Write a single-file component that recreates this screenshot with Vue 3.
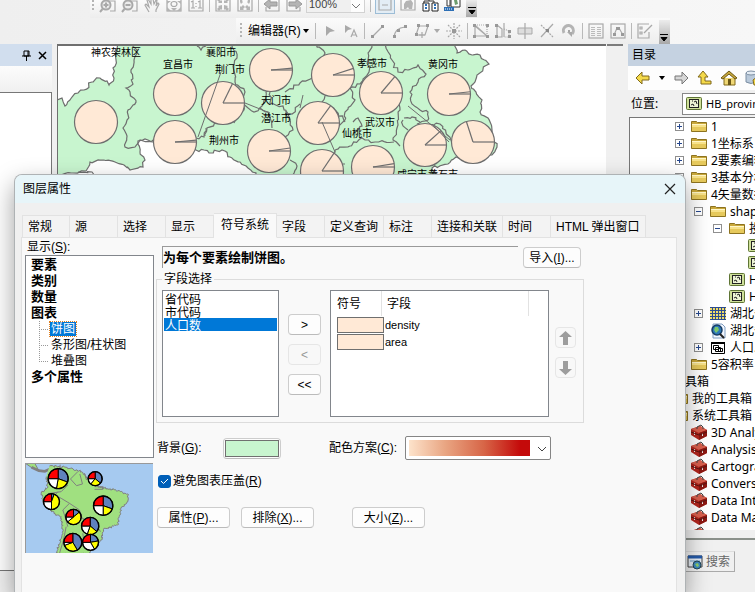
<script setup>
import { ref } from 'vue'

const G = 'fill="none" stroke="#a9a9a9" stroke-width="1.2"'
const F = 'fill="#b4b4b4"'
const topIcons = [
  { name: '放大', svg: `<g ${G}><path d="M6 1h9v10h-5M4 4v-3"/><circle cx="6" cy="5" r="4.5" stroke-width="2" fill="#ececec"/><path d="M3.500 5h5M6 2.500v5M2.500 9L0 12" stroke-width="2"/></g>` },
  { name: '缩小', svg: `<g ${G}><path d="M6 1h9v10h-5M4 4v-3"/><circle cx="6" cy="5" r="4.500" stroke-width="2" fill="#ececec"/><path d="M3.500 5h5M2.500 9L0 12" stroke-width="2"/></g>` },
  { name: '平移', svg: `<path ${G} d="M5 12L1 5l1-1 3 3L3 0l1-1 3 5V-1h2l1 5 2-4h1l-1 6 2-3 1 1-3 6v2"/>` },
  { name: '全图', svg: `<rect ${G} x="1" y="-2" width="14" height="13"/><ellipse ${G} cx="8" cy="4" rx="3" ry="2.500"/><path ${F} d="M1 1l4 0-4 3zM15 1h-4l4 3zM8 11l-3-3h6zM1 11V7l4 4zM15 11V7l-4 4z"/>` },
  { name: '1:1', svg: `<path ${G} d="M1-2v13h14V-2M3 2l2-1v7M3 8h4M10 2l2-1v7M10 8h4M8 3v1M8 6v1"/>` },
  { sep: true },
  { name: '固定放大', svg: `<path ${G} d="M1-2v13h14V-2"/><path ${F} d="M7 3H3l1-1-3-3 2-1 3 3 1-1zM9 3h4l-1-1 3-3-2-1-3 3-1-1zM7 5v5L6 9l-2 2-2-2 2-2-1-1zM9 5v5l1-1 2 2 2-2-2-2 1-1z"/>` },
  { name: '固定缩小', svg: `<path ${G} d="M1-2v13h14V-2"/><path ${F} d="M3 10V6l1 1 2-2 2 2-2 2 1 1zM13 10V6l-1 1-2-2-2 2 2 2-1 1zM3-1h3L5 1l1 1-2 2-1-2zM13-1h-3l1 2-1 1 2 2 1-2z"/>` },
  { sep: true },
  { name: '后退', svg: `<path ${G} d="M2 7v4h13V-1"/><path ${F} stroke="#999" d="M0 4l6-5v3h7v4H6v3z"/>` },
  { name: '前进', svg: `<path ${G} d="M14 7v4H1V-1"/><path ${F} stroke="#999" d="M16 4l-6-5v3H3v4h7v3z"/>` },
]
const viewIcons = [
  { name: '草稿模式', svg: `<path ${G} d="M2-2v12h12V-2M5 5h6M8-2"/>`, pressed: true },
  { name: '焦点', svg: `<path ${G} d="M1-2v12h14V-2"/><path ${F} d="M4 9V4l2-3 5-1 2 3-1 6H9L8 7 6 9z"/>` },
  { name: '切换', svg: `<path fill="none" stroke="#333" d="M2 4V1h10v3M7 1v-2"/><path fill="#fff" stroke="#222" d="M1 3h6v8H1zM10 3h6v8h-6z"/><path stroke="#2d6fb5" stroke-width="2" d="M3 5h2M3 8h2M12 5h2M12 8h2"/>` },
  { name: '工具栏', svg: `<path fill="#fff" stroke="#333" d="M7-2h9v9H7zM3-2h3v8H3z"/><path fill="#6d9d6e" d="M10 0h3l1 4-3 1z"/><path fill="#2d6fb5" d="M0 7h10v4H0z"/><path stroke="#fff" stroke-dasharray="1 1" d="M1 9h8"/>` },
]
const editIcons = [
  { name: '编辑工具', svg: `<path fill="#a9a9a9" d="M5 3l9 5-5 1-4 4z"/>` },
  { name: '注记编辑', svg: `<path fill="#a9a9a9" d="M2 2l7 4-4 1-3 3z"/><path ${G} stroke-width="2" d="M8 14l3-7 3 7M9 12h4"/>` },
  { sep: true },
  { name: '直线', svg: `<path ${G} d="M3 13L13 3"/><path fill="#999" d="M1 12h3v3H1zM11 2h3v3h-3z"/>` },
  { name: '弧线', svg: `<path ${G} d="M2 14Q3 5 13 4"/><path fill="#999" d="M1 12h3v3H1zM5 6h3v3H5zM12 2h3v3h-3z"/>` },
  { name: '追踪', svg: `<path ${G} stroke-width="1.500" d="M5 3h9l-3 9H2z"/><path fill="#999" d="M3 1h3v3H3zM12 1h3v3h-3zM1 10h3v3H1z"/><path ${G} d="M8 9v6M5 12h6"/>`, menu: true },
  { name: '点', svg: `<path ${G} stroke-dasharray="2 1" d="M8 0v16M0 8h16M2 2l12 12M14 2L2 14"/><path fill="#999" d="M6 6h4v4H6z"/>` },
  { sep: true },
  { name: '编辑折点', svg: `<path ${G} d="M2 2v11h12zM14 13L2 3"/><path ${G} stroke-dasharray="1 1" d="M2 2h12v11"/><path fill="#999" d="M0 1h3v3H0zM0 12h3v3H0zM13 12h3v3h-3zM13 1h3v3h-3z"/>` },
  { name: '整形要素', svg: `<path ${G} d="M2 2v12h5V6zM9 0v14"/><path ${G} stroke-dasharray="1 1" d="M9 6l5 2v6H9"/><path fill="#999" d="M0 1h3v3H0zM0 12h3v3H0zM13 7h3v3h-3zM13 12h3v3h-3z"/>` },
  { name: '裁剪面', svg: `<path fill="#ddd" stroke="#a9a9a9" d="M1 5h14v6H1z"/><path ${G} stroke-width="1.500" d="M8 0v16"/>` },
  { name: '分割', svg: `<path ${G} d="M2 14L14 1"/><path ${G} stroke-dasharray="2 1" d="M2 2l12 12"/><path fill="#888" d="M7 6h3v3H7z"/>` },
  { name: '旋转', svg: `<path fill="none" stroke="#b4b4b4" stroke-width="3" d="M3 10A5 5 0 1 1 11 11"/><path fill="#aaa" d="M6 9h5v5z"/><circle cx="8" cy="8" r="1" fill="#888"/>` },
  { sep: true },
  { name: '属性', svg: `<rect ${G} x="1" y="1" width="14" height="14"/><path stroke="#bbb" d="M3 4.500h4M3 6.500h4M3 8.500h4M3 10.500h4M3 12.500h4M9 4.500h4M9 6.500h4M9 8.500h4M9 10.500h4M9 12.500h4"/>` },
  { name: '草图属性', svg: `<rect ${G} x="1" y="1" width="14" height="14"/><path ${G} stroke-width="1.500" d="M4 12l3-7h2l4 7"/><path fill="#999" d="M3 10h3v3H3zM6 4h4v3H6zM11 10h3v3h-3z"/>` },
  { sep: true },
  { name: '创建要素', svg: `<path ${G} d="M12 1H1v14h11V9M3 4h2v2H3zM3 9h2v2H3z"/><path ${G} stroke-width="2" d="M7 10l8-8"/>` },
]

/* Adds small deterministic steps to a polyline so that borders look surveyed. */
function rough(text, amp = 2) {
  const pts = text.trim().split(/\s+/).map(p => p.split(',').map(Number))
  let seed = pts[0][0] * 7 + pts[0][1] * 13 + 5
  const rnd = () => ((seed = (seed * 1103 + 12345) % 65521) / 65521 - 0.5) * amp * 2
  let d = `M${pts[0]}`
  for (let i = 1; i < pts.length; i++) {
    const [ax, ay] = pts[i - 1], [bx, by] = pts[i]
    const n = Math.max(1, Math.round(Math.hypot(bx - ax, by - ay) / 3))
    for (let k = 1; k <= n; k++) {
      const j = k < n ? 1 : 0
      d += `L${(ax + (bx - ax) * k / n + rnd() * j).toFixed(1)} ${(ay + (by - ay) * k / n + rnd() * j).toFixed(1)}`
    }
  }
  return d
}
const land = rough('117,44 116,60 113,68 114,78 109,85 107,81 100,78 92,82 84,90 78,93 72,97 65,106 62,98 56,100 56,176 73,173 86,171 90,162 104,160 115,162 124,165 130,170 143,167 145,160 140,152 138,141 145,139 153,142 175,150 196,150 204,150 209,153 222,150 230,157 240,162 248,168 256,173 256,180 440,180 432,168 448,164 456,157 462,160 480,160 492,155 497,147 494,140 492,130 488,118 480,112 482,100 476,92 471,86 475,82 477,75 489,64 480,55 472,55 465,50 457,53 454,44', 1.5)
const borders = [
  '132,44 137,50 134,60 131,70 133,84 126,88 130,92 136,102 128,110 127,120 123,128 127,136 125,147 135,147 140,140 152,141 160,132',
  '232,44 237,58 233,66 235,82 245,92 244,110 236,118 234,123',
  '205,136 207,128 220,122', '196,138 204,137 206,128',
  '197,46 201,50 206,46', '244,105 254,112 262,106 266,92 275,86',
  '260,108 268,112 272,128', '316,44 325,53 322,60',
  '372,44 368,60 369,72 360,84 350,88 355,100 345,112 345,120 338,128',
  '285,92 300,83 312,78', '385,44 392,60 398,72 408,70 418,65 426,74 418,82 410,92 412,104 420,110 428,112 428,120 417,124',
  '399,98 400,110 397,128 393,140 400,146', '325,96 322,104 335,110 345,122',
  '404,118 412,117 420,122', '403,120 403,126 408,130', '353,122 358,118 362,126 355,132',
  '300,104 292,114 286,112 293,130 284,138', '335,150 350,146 362,138 375,142 394,142',
  '335,150 334,158 345,164', '290,160 297,166 292,176', '270,92 270,104 283,106 290,120',
  '428,125 440,124 446,133 452,142', '78,172 92,172 94,180',
].map(p => rough(p, 1.5))
const leaders = ['M198,137L221,72', 'M245,103L270,113', 'M322,122L335,152', 'M408,106L450,140', 'M303,95L300,108', 'M432,124L449,142']
const charts = [
  [96, 122], [175, 94], [175, 142, [0, 5]], [223, 103, [0, 64]], [271, 70, [0, 5]],
  [269, 151, [0, 8]], [333, 75, [0, 18]], [381, 93, [0, 50]], [449, 94, [0, 6]],
  [318, 123, [0, 54]], [425, 145, [0, 42]], [473, 142, [0, 108]], [322, 171, [0, 56]], [373, 167, [0, 9]],
]
const R = 21.5
const ray = (x, y, a) => `M${x} ${y}L${x + R * Math.cos(a * Math.PI / 180)} ${y - R * Math.sin(a * Math.PI / 180)}`
const cities = [
  ['神农架林区', 91, 56], ['襄阳市', 206, 56], ['宜昌市', 163, 68], ['荆门市', 215, 73],
  ['天门市', 261, 104], ['潜江市', 261, 122], ['荆州市', 209, 144], ['孝感市', 357, 67],
  ['黄冈市', 428, 68], ['武汉市', 365, 126], ['仙桃市', 342, 137], ['咸宁市', 397, 178], ['黄石市', 428, 178],
]

const tree = [
  [2, 'folder', '1', '+'], [2, 'folder', '1坐标系', '+'], [2, 'folder', '2要素编辑', '+'],
  [2, 'folder', '3基本分析', '+'], [2, 'folder', '4矢量数据', '-'], [3, 'folder', 'shape', '-'],
  [4, 'folder', '投影', '-'], [5, 'shp', 'HB'], [5, 'shp', 'HB'], [4, 'shp', 'HB'], [4, 'shp', 'HB'],
  [3, 'raster', '湖北省', '+'], [3, 'layer', '湖北省'], [3, 'table', '人口.xls', '+'],
  [2, 'folder', '5容积率'], [0, 'none', '工具箱'], [1, 'folder', '我的工具箱'], [1, 'folder', '系统工具箱'],
  [2, 'box', '3D Analyst'], [2, 'box', 'Analysis'], [2, 'box', 'Cartography'], [2, 'box', 'Conversion'],
  [2, 'box', 'Data Interop'], [2, 'box', 'Data Manage'], [2, 'box', ''],
]
const glyphs = {
  none: '',
  folder: '<path fill="#c9a83a" stroke="#8d7320" d="M.5 12.500V2.500h5l1 1h9v9z"/><path fill="#f7e28a" d="M1 6h14v2H1z"/><path fill="#e6c95c" d="M1 8h14v4H1z"/><path stroke="#fff6c8" d="M1 5.500h14"/>',
  shp: '<rect x=".5" y="1.500" width="15" height="12" rx="1" fill="#cfe09a" stroke="#5f7535"/><rect x="3.500" y="3.500" width="9" height="8" fill="#eef5d6" stroke="#222"/><path stroke="#222" fill="none" d="M5 9l2-1 1 2M8 6l2-1 1 3M6 5h1"/>',
  raster: '<path fill="#2c4c8f" d="M0 1h16v13H0z"/><path stroke="#f0dc69" stroke-width="2" stroke-dasharray="2 1" d="M0 3h16M0 6h16M0 9h16M0 12h16"/>',
  layer: '<path fill="#f2f7ff" stroke="#7f9cc0" d="M3 1h9l3 3v11H3z"/><circle cx="7" cy="7" r="5" fill="#2d78b8" stroke="#163d66" stroke-width="1.500"/><path fill="#7dc56a" d="M5 4l3 0 1 3-3 3-2-3z"/><path stroke="#222" stroke-width="2" d="M10 11l4 4"/>',
  table: '<path fill="#fff" stroke="#000" d="M1.500 2.500h13v11h-13z"/><path stroke="#000" stroke-width="2" d="M1 3h14"/><path fill="#fff" stroke="#000" d="M3.500 5.500h5v4h-5zM5.500 7.500h5v4h-5zM8.500 8.500h4v3h-4z"/>',
  box: '<path fill="#b3261e" d="M0 4l9-3 7 4v6l-8 4-8-5z"/><path fill="#d9604e" d="M0 4l9-3 7 4-8 3z"/><path fill="#8c1812" d="M8 8l8-3v6l-8 4z"/><path fill="none" stroke="#444" d="M6 4V2l4-2 2 2v2"/><path stroke="#eee" d="M3.500 7v3M11.500 8v3"/><path stroke="#5a1410" d="M0 7l8 3 8-3" fill="none"/>',
}
const tabs = ['常规', '源', '选择', '显示', '符号系统', '字段', '定义查询', '标注', '连接和关联', '时间', 'HTML 弹出窗口']
const activeTab = ref('符号系统')
const field = ref(['人口数'])
const avoid = ref(true)
const scale = ref('100%')

/* Sector list of a pie: x, y, radius, end of blue, end of yellow, degrees clockwise from the top. */
const previewPies = [
  [176, 146, 30, 110, 190], [287, 146, 21, 130, 220], [156, 215, 24, 20, 180], [311, 227, 29, 110, 180],
  [222, 261, 23, 50, 230], [272, 288, 26, 130, 200], [220, 337, 27, 150, 250], [273, 337, 24, 80, 150],
].map(([x, y, r, a, b]) => {
  const p = t => `${x + r * Math.sin(t * Math.PI / 180)} ${y - r * Math.cos(t * Math.PI / 180)}`
  const s = (f, t, c) => ({ c, d: `M${x} ${y}L${p(f)}A${r} ${r} 0 ${t - f > 180 ? 1 : 0} 1 ${p(t)}Z` })
  return { x, y, r, parts: [s(0, a, '#5f82bd'), s(a, b, '#ff0'), s(b, 270, '#fff'), s(270, 360, '#f00')] }
})
const continent = rough('150,108 200,112 245,125 268,150 300,172 345,180 385,192 385,215 365,235 355,285 312,298 305,330 265,372 168,372 190,310 185,260 155,245 130,215 125,190 145,170 140,140', 3)
</script>

<template>
  <div class="app">
    <header class="bars">
      <div class="bar first">
        <i class="grip"></i>
        <template v-for="(t, i) in topIcons" :key="i">
          <i v-if="t.sep" class="sep"></i>
          <button v-else class="tool" :aria-label="t.name"><svg width="16" height="16" v-html="t.svg" /></button>
        </template>
        <div class="scale">
          <input v-model="scale" aria-label="缩放比例">
          <svg width="10" height="6"><path d="M1 1l4 4 4-4" fill="none" stroke="#777" /></svg>
        </div>
        <i class="sep"></i>
        <button v-for="t in viewIcons" :key="t.name" class="tool" :class="{ pressed: t.pressed }" :aria-label="t.name"><svg width="16" height="16" v-html="t.svg" /></button>
        <button class="more" aria-label="工具栏选项"><svg width="8" height="9"><path d="M0 1.500h8M1 4.500h6L4 8z" stroke="#000" /></svg></button>
      </div>
      <div class="bar second">
        <i class="grip"></i>
        <button class="editor">编辑器(R)<i class="caret"></i></button>
        <i class="sep"></i>
        <template v-for="(t, i) in editIcons" :key="i">
          <i v-if="t.sep" class="sep"></i>
          <button v-else class="tool" :aria-label="t.name"><svg width="16" height="16" v-html="t.svg" /><i v-if="t.menu" class="caret pale"></i></button>
        </template>
        <button class="more" aria-label="工具栏选项"><svg width="8" height="9"><path d="M0 1.500h8M1 4.500h6L4 8z" stroke="#000" /></svg></button>
      </div>
    </header>

    <main class="work">
      <aside class="contents">
        <div class="dock">
          <button class="mini" aria-label="固定"><svg width="9" height="11"><path d="M2 1h5v5H2zM0 6h9M4.500 6v5M6 1v5" fill="none" stroke="#000" /></svg></button>
          <button class="mini" aria-label="关闭"><svg width="9" height="9"><path d="M1 1l7 7M8 1L1 8" stroke="#000" stroke-width="1.500" /></svg></button>
        </div>
        <div class="strip"></div>
        <div class="toc"></div>
        <div class="below"></div>
      </aside>

      <section class="canvas">
        <svg class="map">
          <g transform="translate(-58 -46)" stroke="#6e6e6e" fill="none" stroke-width="1.200">
            <path :d="land" fill="#c8f5cf" />
            <path v-for="(b, i) in borders" :key="i" :d="b" />
            <g v-for="(c, i) in charts" :key="'c' + i">
              <circle :cx="c[0]" :cy="c[1]" :r="R" fill="#ffe9d6" />
              <path v-for="a in c[2] || []" :key="a" :d="ray(c[0], c[1], a)" />
            </g>
            <path v-for="l in leaders" :key="l" :d="l" stroke-width="1" />
            <g class="city" stroke="none" fill="#000">
              <text v-for="c in cities" :key="c[0]" :x="c[1]" :y="c[2]">{{ c[0] }}</text>
            </g>
          </g>
        </svg>
      </section>
      <div class="scroll"></div>

      <aside class="catalog">
        <h2>目录</h2>
        <nav class="nav">
          <button aria-label="后退"><svg width="16" height="16"><path d="M1 8l6-6v4h7v4H7v4z" fill="#f4d94a" stroke="#80691a" /></svg></button>
          <i class="caret"></i>
          <button aria-label="前进"><svg width="16" height="16"><path d="M15 8L9 2v4H2v4h7v4z" fill="#d6d6d6" stroke="#777" /></svg></button>
          <button aria-label="向上"><svg width="16" height="16"><path d="M6 1l5 6H8v4h6v3H4V7H1z" fill="#f4d94a" stroke="#80691a" /></svg></button>
          <button aria-label="主目录"><svg width="16" height="16"><path d="M3 8v7h11V8" fill="#efd774" stroke="#80691a" /><path d="M0 8l8-7 8 7-2 1-6-5-6 5z" fill="#c9a83a" stroke="#6b5716" /><path d="M7 9h3v6H7z" fill="#6b5716" /></svg></button>
          <button aria-label="默认数据库"><svg width="16" height="16"><path d="M1 3v9q5 3 10 0V3" fill="#b9c9da" stroke="#7d8fa3" /><ellipse cx="6" cy="3" rx="5" ry="2" fill="#e3ebf3" stroke="#7d8fa3" /><path d="M8 10l5-4 4 4v5H9z" fill="#f4d94a" stroke="#80691a" /></svg></button>
        </nav>
        <div class="place">
          <label for="place">位置:</label>
          <div class="placebox"><svg width="16" height="16" v-html="glyphs.shp" /><input id="place" value="HB_province"></div>
        </div>
        <ul class="tree">
          <li v-for="(n, i) in tree" :key="i" :style="{ paddingLeft: n[0] * 19 + 7 + 'px' }">
            <span class="exp">
              <svg v-if="n[3]" width="9" height="9"><rect x=".5" y=".5" width="8" height="8" fill="#fff" stroke="#8f8f8f" /><path :d="n[3] === '+' ? 'M2 4.500h5M4.500 2v5' : 'M2 4.500h5'" stroke="#26478d" /></svg>
            </span>
            <svg width="16" height="16" v-html="glyphs[n[1]]" /><span class="name">{{ n[2] }}</span>
          </li>
        </ul>
        <div class="docktabs">
          <button><svg width="16" height="16"><path d="M1 2h14v11H1z" fill="#e8eef5" stroke="#444" /><path d="M1 3h14" stroke="#2459a8" stroke-width="3" /><path d="M3 7h10" stroke="#6d9dc9" /><circle cx="10" cy="11" r="4" fill="#3d8bc2" stroke="#245" /><path d="M8 10l3-1 1 3-2 1z" fill="#8fd06b" /></svg>搜索</button>
        </div>
      </aside>
    </main>

    <section class="dialog" role="dialog" aria-labelledby="dlg-title">
      <div class="title">
        <h1 id="dlg-title">图层属性</h1>
        <button class="close" aria-label="关闭"><svg width="12" height="12"><path d="M1 1l10 10M11 1L1 11" stroke="#222" stroke-width="1.200" /></svg></button>
      </div>
      <div class="tabs" role="tablist">
        <button v-for="t in tabs" :key="t" role="tab" :aria-selected="t === activeTab" :class="{ active: t === activeTab }" @click="activeTab = t">{{ t }}</button>
      </div>
      <div class="panel">
        <div class="side">
          <span class="cap">显示(<u>S</u>):</span>
          <ul class="kinds">
            <li>要素</li>
            <li>类别</li>
            <li>数量</li>
            <li>图表
              <ul>
                <li><span class="sel">饼图</span></li>
                <li><span>条形图/柱状图</span></li>
                <li><span>堆叠图</span></li>
              </ul>
            </li>
            <li>多个属性</li>
          </ul>
          <svg class="preview" width="128" height="90" viewBox="0 0 128 90">
            <rect width="128" height="90" fill="#a6caf0" />
            <g transform="translate(-25.500 -33) scale(.3333)" stroke="#808080" stroke-width="3" fill="none">
              <path d="M78 100h28l12 22-20-8z" fill="#a0e080" />
              <path d="M96 112l22 10 18 2 14-6" stroke-width="8" />
              <path :d="continent" fill="#a0e080" />
              <path d="M182 104l-2 20M235 125l-22 22 18 20 18-5-8-30M255 130l6 20M285 170h25v8h-25M205 165l-20 20-40 6M175 185l-10 12M155 190l30 15 25 15-20 20 5 15 10 35M210 220l30 20 8 25 40 15 15 25M200 290l-8 40-12 40M250 310l5 40" />
              <g v-for="p in previewPies" :key="p.x + p.y" stroke="#000">
                <path v-for="s in p.parts" :key="s.c" :d="s.d" :fill="s.c" />
                <circle :cx="p.x" :cy="p.y" :r="p.r" stroke-width="4" />
              </g>
            </g>
            <path d="M.5 90V.5H128" fill="none" stroke="#999" />
          </svg>
        </div>

        <div class="main">
          <div class="headline">
            <h3>为每个要素绘制饼图。</h3>
            <button class="btn import">导入(<u>I</u>)...</button>
          </div>
          <fieldset>
            <legend>字段选择</legend>
            <div class="picker">
              <select v-model="field" class="fields" multiple size="9" aria-label="可用字段">
                <option>省代码</option>
                <option>市代码</option>
                <option>人口数</option>
              </select>
              <div class="moves">
                <button class="btn">&gt;</button>
                <button class="btn" disabled>&lt;</button>
                <button class="btn">&lt;&lt;</button>
              </div>
              <div class="symbols">
                <table>
                  <thead><tr><th class="c1"><span>符号</span></th><th><span>字段</span></th></tr></thead>
                  <tbody>
                    <tr v-for="f in ['density', 'area']" :key="f"><td class="c1"><i class="swatch"></i></td><td>{{ f }}</td></tr>
                  </tbody>
                </table>
              </div>
              <div class="order">
                <button class="btn" disabled aria-label="上移"><svg width="13" height="14"><path d="M6.500 0L13 6H9v8H4V6H0z" fill="#9d9d9d" /></svg></button>
                <button class="btn" disabled aria-label="下移"><svg width="13" height="14"><path d="M6.500 14L13 8H9V0H4v8H0z" fill="#9d9d9d" /></svg></button>
              </div>
            </div>
          </fieldset>
          <div class="colors">
            <label for="bg">背景(<u>G</u>):</label>
            <button id="bg" class="btn bg"><i></i></button>
            <label for="ramp" class="ramplabel">配色方案(<u>C</u>):</label>
            <div class="ramp">
              <select id="ramp"><option></option></select>
              <svg width="10" height="6"><path d="M1 1l4 4 4-4" fill="none" stroke="#444" /></svg>
            </div>
          </div>
          <label class="check"><input v-model="avoid" type="checkbox"><svg width="9" height="7"><path d="M1 3l2.500 2.500L8 1" fill="none" stroke="#fff" /></svg><span>避免图表压盖(<u>R</u>)</span></label>
          <div class="actions">
            <button class="btn">属性(<u>P</u>)...</button>
            <button class="btn">排除(<u>X</u>)...</button>
            <button class="btn size">大小(<u>Z</u>)...</button>
          </div>
        </div>
      </div>
    </section>
  </div>
</template>

<style>
body { background: #f0f0f0; }
</style>

<style scoped>
.app, .app * { box-sizing: border-box; }
.app {
  position: relative;
  display: flex;
  flex-direction: column;
  min-height: 100vh;
  overflow: hidden;
  background: #f0f0f0;
  color: #000;
  font: 12px/16px "Liberation Sans", "Noto Sans CJK SC", sans-serif;
}
button { margin: 0; padding: 0; border: 0; background: none; color: inherit; font: inherit; }
ul, h1, h2, h3 { margin: 0; padding: 0; list-style: none; font: inherit; }
svg { display: block; flex: none; overflow: visible; }
i { flex: none; }

.bars { height: 44px; background: linear-gradient(90deg, #efefef, #f7f7f7); }
.bar { display: flex; align-items: center; gap: 6px; width: max-content; background: linear-gradient(#fbfbfb, #ededed); }
.bar.first { height: 18px; margin-left: 90px; padding-left: 2px; align-items: flex-start; }
.bar.second { height: 26px; margin-left: 236px; padding-left: 4px; }
.grip { width: 2px; height: 16px; background: repeating-linear-gradient(#b5b5b5 0 2px, transparent 2px 4px); }
.first .grip { height: 12px; }
.sep { width: 1px; height: 16px; margin: 0 -1px; background: #b9b9b9; }
.first .sep { height: 12px; }
.tool { display: flex; align-items: center; gap: 4px; }
.tool.pressed { padding: 0 1px; background: #e3edf5; box-shadow: 0 0 0 1px #9dbdd6; height: 13px; align-items: flex-start; }
.scale { display: flex; align-items: center; width: 59px; height: 13px; margin-left: -2px; padding-right: 3px; border: 1px solid #d2d2d2; border-top: 0; background: #fdfdfd; }
.scale input { min-width: 0; height: 12px; padding: 0 0 4px 2px; border: 0; background: #f0f0f0; color: #444; font: 11px/8px "Liberation Sans", sans-serif; flex: 1; }
.more { display: flex; align-items: flex-end; justify-content: center; width: 11px; height: 24px; padding-bottom: 2px; background: linear-gradient(#ececec, #a8a8a8); align-self: flex-end; }
.first .more { height: 17px; align-self: flex-start; }
.caret { border: 3px solid transparent; border-top: 4px solid #000; border-bottom: 0; width: 0; height: 0; }
.caret.pale { border-top-color: #aaa; }
.editor { display: flex; align-items: center; gap: 2px; margin-right: 1px; }

.work { display: flex; flex: 1; }
.contents { display: flex; flex-direction: column; width: 52px; margin-right: 5px; }
.dock { display: flex; align-items: center; justify-content: flex-end; gap: 7px; height: 22px; padding-right: 5px; background: #d1deee; }
.strip { height: 26px; background: linear-gradient(#fcfcfc, #f0f0f0); }
.toc { flex: 1; border: 1px solid #777; border-left: 0; background: #fff; }
.below { height: 21px; }
.canvas { flex: 1; min-width: 0; border: solid #6f6f6f; border-width: 2px 0 0 1px; background: #fff; }
.map { width: 100%; height: 130px; overflow: hidden; }
.city { font: 10px "Noto Sans CJK SC", sans-serif; }
.scroll { width: 16px; margin: 0 5px 0 1px; border-top: 2px solid #7c7c7c; background: #f0f0f0; }

.catalog { display: flex; flex-direction: column; width: 127px; overflow: hidden; white-space: nowrap; font-family: "Noto Sans", "Noto Sans CJK SC", sans-serif; }
.catalog h2 { height: 22px; padding-left: 4px; background: #c5d2e1; line-height: 22px; }
.nav { display: flex; align-items: center; gap: 8px; height: 24px; padding-left: 7px; background: #fdfdfd; }
.place { display: flex; align-items: center; justify-content: space-between; height: 27px; padding-left: 3px; }
.placebox { display: flex; align-items: center; gap: 4px; width: 73px; height: 22px; padding-left: 3px; border: 1px solid #888; border-right: 0; background: #fff; }
.placebox input { flex: 1; min-width: 0; padding: 0; border: 0; background: none; font: 11px/16px "Noto Sans", sans-serif; }
.tree { height: 413px; overflow: hidden; border: solid #777; border-width: 1px 0 0 1px; background: #fff; margin-left: 1px; }
.tree li { display: flex; align-items: center; height: 17px; }
.exp { flex: none; width: 16px; }
.name { margin-left: 4px; }
.docktabs { flex: 1; margin-top: 8px; padding-top: 11px; border-top: 2px solid #8b918b; }
.docktabs button { display: flex; align-items: center; gap: 3px; height: 21px; margin-left: 55px; padding: 0 4px 0 3px; border: 1px solid #aaa; border-top-color: #ddd; color: #666; }

.dialog {
  position: absolute;
  top: 174px;
  right: 69px;
  bottom: 0;
  left: 14px;
  display: flex;
  flex-direction: column;
  border: 1px solid #aeb2b4;
  border-bottom: 0;
  border-radius: 8px 8px 0 0;
  background: #f0f0f0;
  box-shadow: 0 10px 24px rgba(0, 0, 0, .38);
}
.title { display: flex; align-items: center; justify-content: space-between; height: 28px; padding: 0 9px 0 8px; border-radius: 7px 7px 0 0; background: #e7f5f9; }
.tabs { display: flex; align-items: flex-end; height: 35px; padding-left: 7px; margin-bottom: -1px; }
.tabs button { min-width: 48px; height: 23px; padding: 0 5px; border: 1px solid #e2e2e2; border-left-width: 0; background: #f3f3f3; text-align: left; white-space: nowrap; }
.tabs button:first-child { border-left-width: 1px; }
.tabs .active { z-index: 1; height: 25px; padding: 0 7px 2px; border-bottom-color: #f9f9f9; background: #f9f9f9; }
.panel { display: flex; flex: 1; margin: 0 8px 0 6px; border: 1px solid #e2e2e2; border-bottom: 0; background: #f9f9f9; }
.side { width: 129px; margin: 0 2px 0 3px; }
.cap { display: block; height: 17px; padding-left: 2px; line-height: 18px; }
.kinds { height: 203px; margin-bottom: 5px; padding: 1px 0 0 5px; border: 1px solid #82868c; background: #fff; font-size: 13px; font-weight: 700; }
.kinds ul { margin-left: 8px; font-size: 12px; font-weight: 400; }
.kinds ul li { display: flex; align-items: center; height: 16px; background: repeating-linear-gradient(#999 0 1px, transparent 1px 2px) 0 0 / 1px 100% no-repeat; }
.kinds ul li:last-child { background-size: 1px 8px; }
.kinds ul li::before { content: ""; width: 9px; border-top: 1px dotted #999; margin-right: 2px; }
.kinds ul span { line-height: 14px; padding: 0 1px; }
.kinds .sel { outline: 1px dotted #e08020; background: #0078d7; color: #fff; }
.preview { overflow: hidden; }
.main { width: 428px; padding-top: 8px; }
.headline { display: flex; align-items: center; gap: 5px; height: 22px; padding: 0 3px 0 6px; }
.headline h3 { flex: 1; height: 22px; border: 1px solid #9a9a9a; border-width: 1px 0 0 1px; font-size: 13px; font-weight: 700; line-height: 22px; }
.btn { display: flex; align-items: center; justify-content: center; height: 21px; padding-top: 1px; border: 1px solid #cdcdcd; border-bottom-color: #bbb; border-radius: 4px; background: #fdfdfd; white-space: nowrap; }
.btn:disabled { border-color: #e6e6e6; background: #f8f8f8; color: #999; }
.import { width: 58px; }
fieldset { min-width: 0; margin: 3px 0 0; padding: 3px 5px 5px; border: 1px solid #dcdcdc; }
legend { margin-left: 0; padding: 0 2px; line-height: 16px; }
.picker { display: flex; height: 127px; }
.fields { width: 117px; height: 127px; padding: 1px; border: 1px solid #82868c; border-radius: 0; background: #fff; font: inherit; line-height: 13px; overflow: hidden; outline: 0; }
.fields option { display: flex; align-items: center; height: 13px; min-height: 13px; padding: 0 1px; line-height: 13px; color: #000; }
.fields option:checked { background: #0078d7 linear-gradient(#0078d7, #0078d7); color: #fff; -webkit-text-fill-color: #fff; }
.moves { display: flex; flex-direction: column; gap: 9px; width: 33px; margin: 0 9px; padding-top: 24px; }
.symbols { flex: 1; border: 1px solid #82868c; background: #fff; }
.symbols table { width: 100%; border-spacing: 0; }
.symbols th, .symbols td { padding: 0; text-align: left; font-weight: 400; }
.symbols td { height: 17px; font-size: 11px; line-height: 16px; }
.symbols .c1 { width: 54px; padding-left: 6px; }
.symbols th span { display: block; height: 25px; border-right: 1px solid #e2e2e2; line-height: 26px; }
.symbols .c1 span { width: 45px; }
.symbols th:last-child span { width: 144px; padding-left: 2px; }
.swatch { display: block; width: 47px; height: 16px; border: 1px solid #6f6f6f; background: #ffe9d6; }
.order { display: flex; flex-direction: column; gap: 9px; width: 21px; margin: 0 2px 0 6px; padding-top: 37px; }
.colors { display: flex; align-items: center; height: 24px; margin-top: 13px; padding-left: 1px; }
.colors label { width: 66px; }
.colors .ramplabel { width: 76px; margin-left: 48px; }
.bg { width: 58px; padding: 1px; }
.bg i { width: 100%; height: 100%; border: 1px solid #707070; background: #c8f5cf; }
.ramp { position: relative; width: 146px; height: 24px; }
.ramp select { width: 100%; height: 24px; border: 1px solid #858585; border-radius: 2px; appearance: none; background: linear-gradient(90deg, #fde3cb, #e9a582 30%, #d76547 62%, #c40a0a 92%) 3px 3px / 121px 16px no-repeat #fff; }
.ramp svg { position: absolute; right: 4px; top: 10px; pointer-events: none; }
.check { position: relative; display: flex; align-items: center; gap: 2px; width: max-content; height: 18px; margin-top: 12px; padding-left: 2px; }
.check input { width: 13px; height: 13px; margin: 0; appearance: none; border: 1px solid #888; border-radius: 3px; }
.check input:checked { border-color: #005fb8; background: #005fb8; }
.check svg { position: absolute; left: 4px; top: 6px; pointer-events: none; }
.actions { display: flex; gap: 11px; margin-top: 17px; padding-left: 1px; }
.actions .btn { width: 73px; }
.actions .size { margin-left: 27px; }
</style>
